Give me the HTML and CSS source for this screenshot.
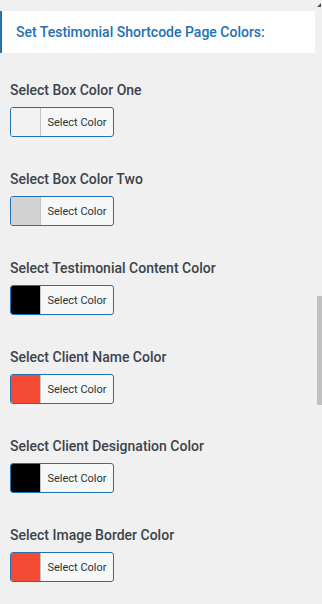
FILE: index.html
```html
<!DOCTYPE html>
<html lang="en">

<head>
    <meta charset="UTF-8">
    <meta name="viewport" content="width=device-width, initial-scale=1.0">
    <title>Testimonial Colors</title>

    <link rel="stylesheet" href="styles.css">
</head>

<body>
    <header class="title-box">
        <h2>Set Testimonial Shortcode Page Colors:</h2>
    </header>
    <main class="fields">
        <section class="field">
            <p class="label">Select Box Color One</p>
            <button class="picker"><span class="swatch swatch-one"></span><span class="text">Select Color</span></button>
        </section>
        <section class="field">
            <p class="label">Select Box Color Two</p>
            <button class="picker"><span class="swatch swatch-two"></span><span class="text">Select Color</span></button>
        </section>
        <section class="field">
            <p class="label">Select Testimonial Content Color</p>
            <button class="picker"><span class="swatch swatch-black"></span><span class="text">Select Color</span></button>
        </section>
        <section class="field">
            <p class="label">Select Client Name Color</p>
            <button class="picker"><span class="swatch swatch-red"></span><span class="text">Select Color</span></button>
        </section>
        <section class="field">
            <p class="label">Select Client Designation Color</p>
            <button class="picker"><span class="swatch swatch-black"></span><span class="text">Select Color</span></button>
        </section>
        <section class="field">
            <p class="label">Select Image Border Color</p>
            <button class="picker"><span class="swatch swatch-red"></span><span class="text">Select Color</span></button>
        </section>
    </main>

    <div class="scroll-arrow"></div>
    <div class="scroll-thumb"></div>
</body>

</html>
```

FILE: styles.css
```css
* {
    padding: 0;
    margin: 0;
    box-sizing: border-box;
    font-family: Roboto, "Liberation Sans", sans-serif;
}

body {
    background-color: #f0f0f1;
    height: 604px;
    overflow: hidden;
}

.title-box {
    width: 315px;
    height: 42px;
    margin-top: 11px;
    background-color: #fff;
    border-left: 2px solid #2271b1;
    padding-left: 14px;
    display: flex;
    align-items: center;
}

.title-box>h2 {
    font-size: 14px;
    font-weight: 500;
    color: #2271b1;
}

.fields {
    display: flex;
    flex-direction: column;
    gap: 32px;
    margin-top: 27px;
    padding-left: 10px;
}

.field {
    display: flex;
    flex-direction: column;
    align-items: flex-start;
    gap: 7px;
}

.label {
    font-size: 14px;
    line-height: 20px;
    font-weight: 500;
    color: #3c434a;
}

.picker {
    display: flex;
    width: 104px;
    height: 30px;
    border: 1px solid #2271b1;
    border-radius: 3px;
    overflow: hidden;
    background-color: #f6f7f7;
    cursor: pointer;
}

.picker>.swatch {
    width: 30px;
    height: 100%;
    border-right: 1px solid #c3c4c7;
}

.picker>.text {
    flex: 1;
    display: flex;
    align-items: center;
    justify-content: center;
    font-size: 11px;
    color: #2c3338;
}

.swatch-one {
    background-color: #f2f2f2;
}

.swatch-two {
    background-color: #d3d3d3;
}

.swatch-black {
    background-color: #000;
}

.swatch-red {
    background-color: #f44a33;
}

.scroll-arrow {
    position: absolute;
    top: 3px;
    right: 1px;
    width: 0;
    height: 0;
    border-left: 4px solid transparent;
    border-bottom: 4px solid #505050;
}

.scroll-thumb {
    position: absolute;
    top: 296px;
    right: 0;
    width: 5px;
    height: 109px;
    background-color: #c1c1c1;
}
```
